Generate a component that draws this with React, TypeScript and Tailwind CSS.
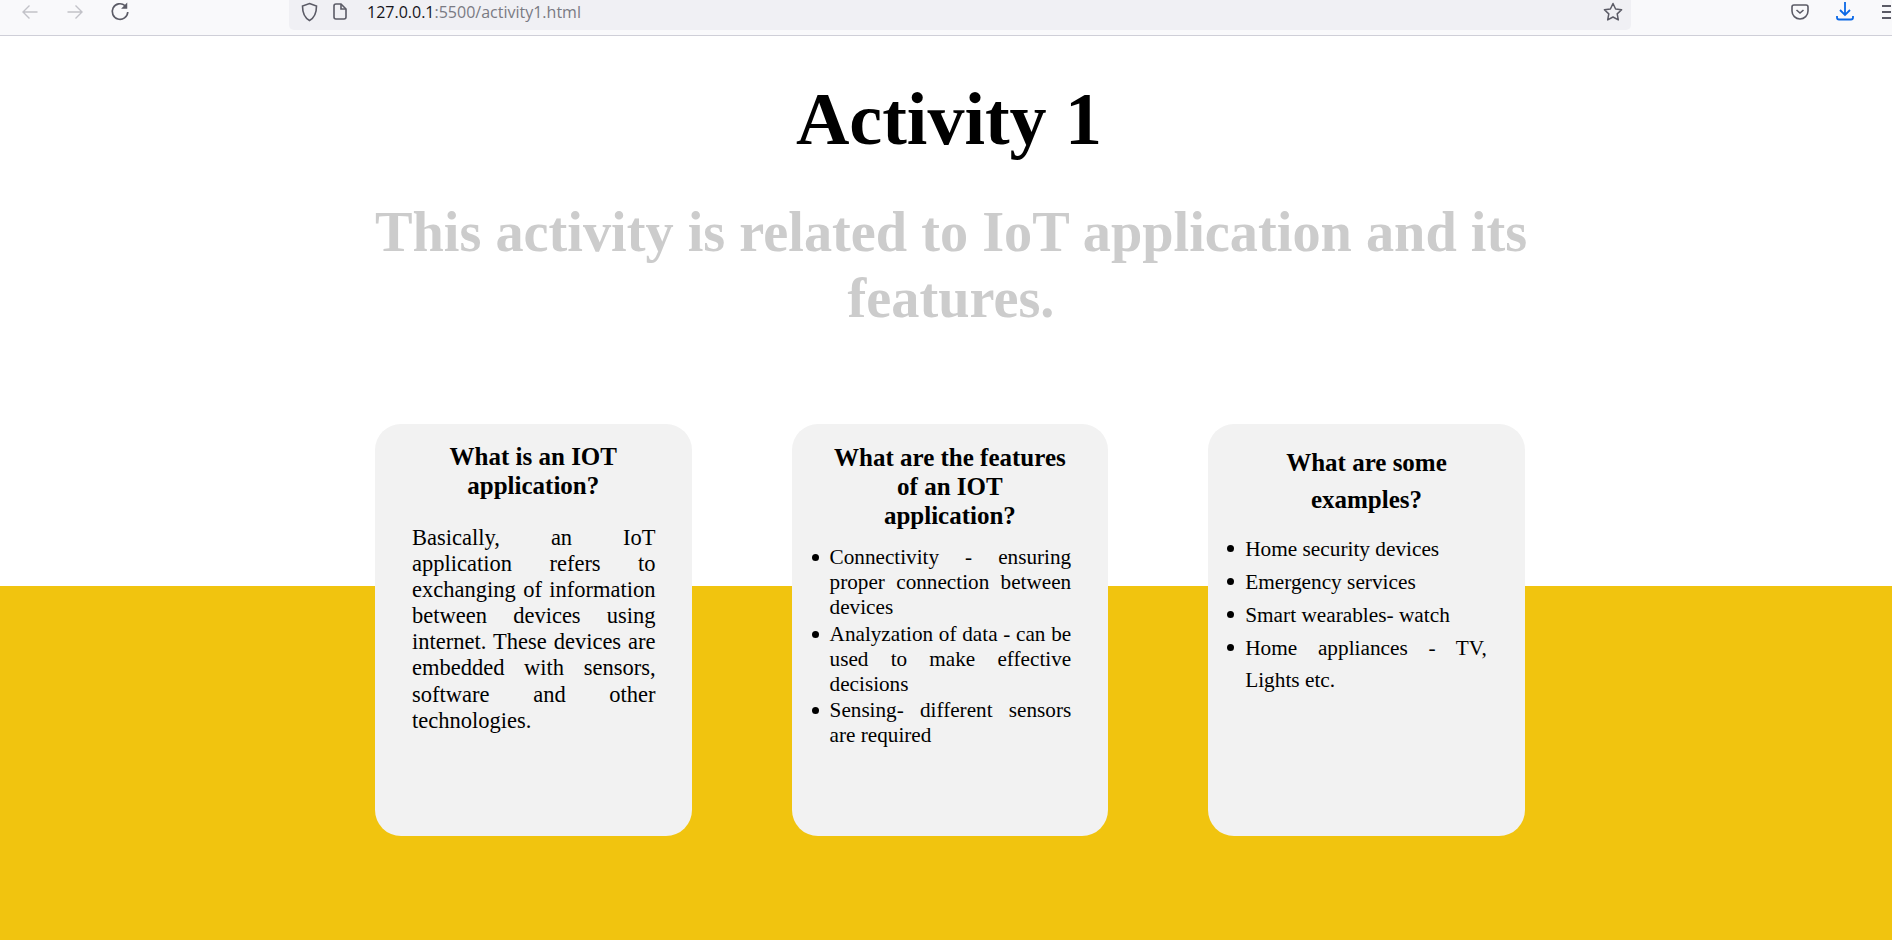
import React from "react";

const cardClass = "w-[316.6px] h-[412px] shrink-0 rounded-[26px] bg-[#f2f2f2] text-black";

const Bullet: React.FC<{ top: string }> = ({ top }) => {
  return <span className={`h-[7px] w-[7px] shrink-0 rounded-full bg-black ${top}`}></span>;
};

const Toolbar: React.FC = () => {
  return (
    <div className="flex h-[36px] items-start border-b border-[#cfcfd8] bg-[#f9f9fb] overflow-hidden">
      <div className="flex h-[30px] w-[289px] shrink-0 items-center pb-[7px]">
        <svg className="ml-[21px]" width="18" height="16" viewBox="0 0 18 16" fill="none" stroke="#c2c2c8" strokeWidth="1.4">
          <path d="M16.5 8H2M8.5 1.5 2 8l6.5 6.5" />
        </svg>
        <svg className="ml-[27px]" width="18" height="16" viewBox="0 0 18 16" fill="none" stroke="#c2c2c8" strokeWidth="1.4">
          <path d="M1.5 8H16M9.5 1.5 16 8l-6.5 6.5" />
        </svg>
        <svg className="ml-[26px]" width="20" height="20" viewBox="0 0 18 18" fill="none" stroke="#5b5b66" strokeWidth="1.5">
          <path d="M13.5 3.2A7 7 0 1 0 16 9" />
          <path d="M15.500 .5v5.500H10" fill="#5b5b66" stroke="none" />
        </svg>
      </div>
      <div className="flex h-[30px] w-[1342px] shrink-0 items-center rounded-b-[5px] bg-[#f0f0f4] pb-[7px]">
        <svg className="ml-[12px]" width="17" height="20" viewBox="0 0 17 20" fill="none" stroke="#5b5b66" strokeWidth="1.6">
          <path d="M8.5 1.5 15.5 4c0 7-1.5 11.500-7 14.500C3 15.500 1.500 11 1.500 4z" />
        </svg>
        <svg className="ml-[15px]" width="14" height="17" viewBox="0 0 14 17" fill="none" stroke="#5b5b66" strokeWidth="1.6">
          <path d="M1 3a2 2 0 0 1 2-2h5l5 5v8a2 2 0 0 1-2 2H3a2 2 0 0 1-2-2z" />
          <path d="M8 1v5h5" />
        </svg>
        <span className="ml-[20px] text-[16px] font-['Open_Sans',sans-serif] text-[#15141a]">
          127.0.0.1<span className="text-[#7a7a83]">:5500/activity1.html</span>
        </span>
        <svg className="ml-auto mr-[8px]" width="20" height="20" viewBox="0 0 20 20" fill="none" stroke="#5b5b66" strokeWidth="1.5">
          <path d="M10 1.500 12.600 7l6 .8-4.400 4.100 1.100 6L10 15l-5.300 2.900 1.100-6L1.400 7.800l6-.8z" strokeLinejoin="round" />
        </svg>
      </div>
      <div className="flex h-[30px] flex-1 items-center pb-[7px]">
        <svg className="ml-[160px]" width="18" height="16" viewBox="0 0 18 16" fill="none" stroke="#5b5b66" strokeWidth="1.6">
          <path d="M1 3a2 2 0 0 1 2-2h12a2 2 0 0 1 2 2v4a8 8 0 0 1-16 0z" />
          <path d="m5.500 6 3.500 3 3.500-3" />
        </svg>
        <svg className="ml-[27px]" width="18" height="20" viewBox="0 0 18 20" fill="none" stroke="#0a68e6" strokeWidth="1.800">
          <path d="M9 0v12M4 8l5 5 5-5" />
          <path d="M1 14v1.500a2 2 0 0 0 2 2h12a2 2 0 0 0 2-2V14" />
        </svg>
        <div className="ml-[28px] flex w-[9px] flex-col gap-[4px]">
          <div className="h-[2px] bg-[#5b5b66]"></div>
          <div className="h-[2px] bg-[#5b5b66]"></div>
          <div className="h-[2px] bg-[#5b5b66]"></div>
        </div>
      </div>
    </div>
  );
};

export default function App() {
  return (
    <div className="h-[940px] w-[1892px] overflow-hidden bg-white font-['Liberation_Serif',serif]">
      <Toolbar />
      <div className="h-[550px] text-center">
        <h1 className="pl-[6px] pt-[42px] text-[74px] font-bold leading-[83px] text-black">Activity 1</h1>
        <h2 className="ml-[361px] mt-[38px] w-[1180px] text-[56.3px] font-bold leading-[66px] text-[#cccccc]">
          This activity is related to IoT application and its features.
        </h2>
      </div>
      <div className="flow-root h-[354px] bg-[#f1c40f]">
        <div className="-mt-[162px] ml-[375px] flex gap-[100px]">
          <div className={cardClass}>
            <h3 className="mx-auto mt-[18px] w-[240px] text-center text-[25px] font-bold leading-[29px]">
              What is an IOT application?
            </h3>
            <p className="ml-[37px] mr-[36px] mt-[25px] text-justify text-[22.5px] leading-[26.1px]">
              Basically, an IoT application refers to exchanging of information between devices using internet. These devices are embedded with sensors, software and other technologies.
            </p>
          </div>
          <div className={cardClass}>
            <h3 className="mx-auto mt-[19px] w-[240px] text-center text-[25px] font-bold leading-[29px]">
              What are the features of an IOT application?
            </h3>
            <ul className="ml-[20px] mr-[37px] mt-[15px] text-justify text-[21.2px] leading-[25px]">
              <li className="mb-[1.5px] flex gap-[11px]">
                <Bullet top="mt-[9px]" />
                <span>Connectivity - ensuring proper connection between devices</span>
              </li>
              <li className="mb-[1.5px] flex gap-[11px]">
                <Bullet top="mt-[9px]" />
                <span>Analyzation of data - can be used to make effective decisions</span>
              </li>
              <li className="flex gap-[11px]">
                <Bullet top="mt-[9px]" />
                <span>Sensing- different sensors are required</span>
              </li>
            </ul>
          </div>
          <div className={cardClass}>
            <h3 className="mx-auto mt-[20px] w-[240px] text-center text-[25px] font-bold leading-[37px]">
              What are some examples?
            </h3>
            <ul className="ml-[19px] mr-[38px] mt-[15px] text-justify text-[21.3px] leading-[32px]">
              <li className="mb-[1px] flex gap-[11px]">
                <Bullet top="mt-[12px]" />
                <span>Home security devices</span>
              </li>
              <li className="mb-[1px] flex gap-[11px]">
                <Bullet top="mt-[12px]" />
                <span>Emergency services</span>
              </li>
              <li className="mb-[1px] flex gap-[11px]">
                <Bullet top="mt-[12px]" />
                <span>Smart wearables- watch</span>
              </li>
              <li className="flex gap-[11px]">
                <Bullet top="mt-[12px]" />
                <span>Home appliances - TV, Lights etc.</span>
              </li>
            </ul>
          </div>
        </div>
      </div>
    </div>
  );
}
